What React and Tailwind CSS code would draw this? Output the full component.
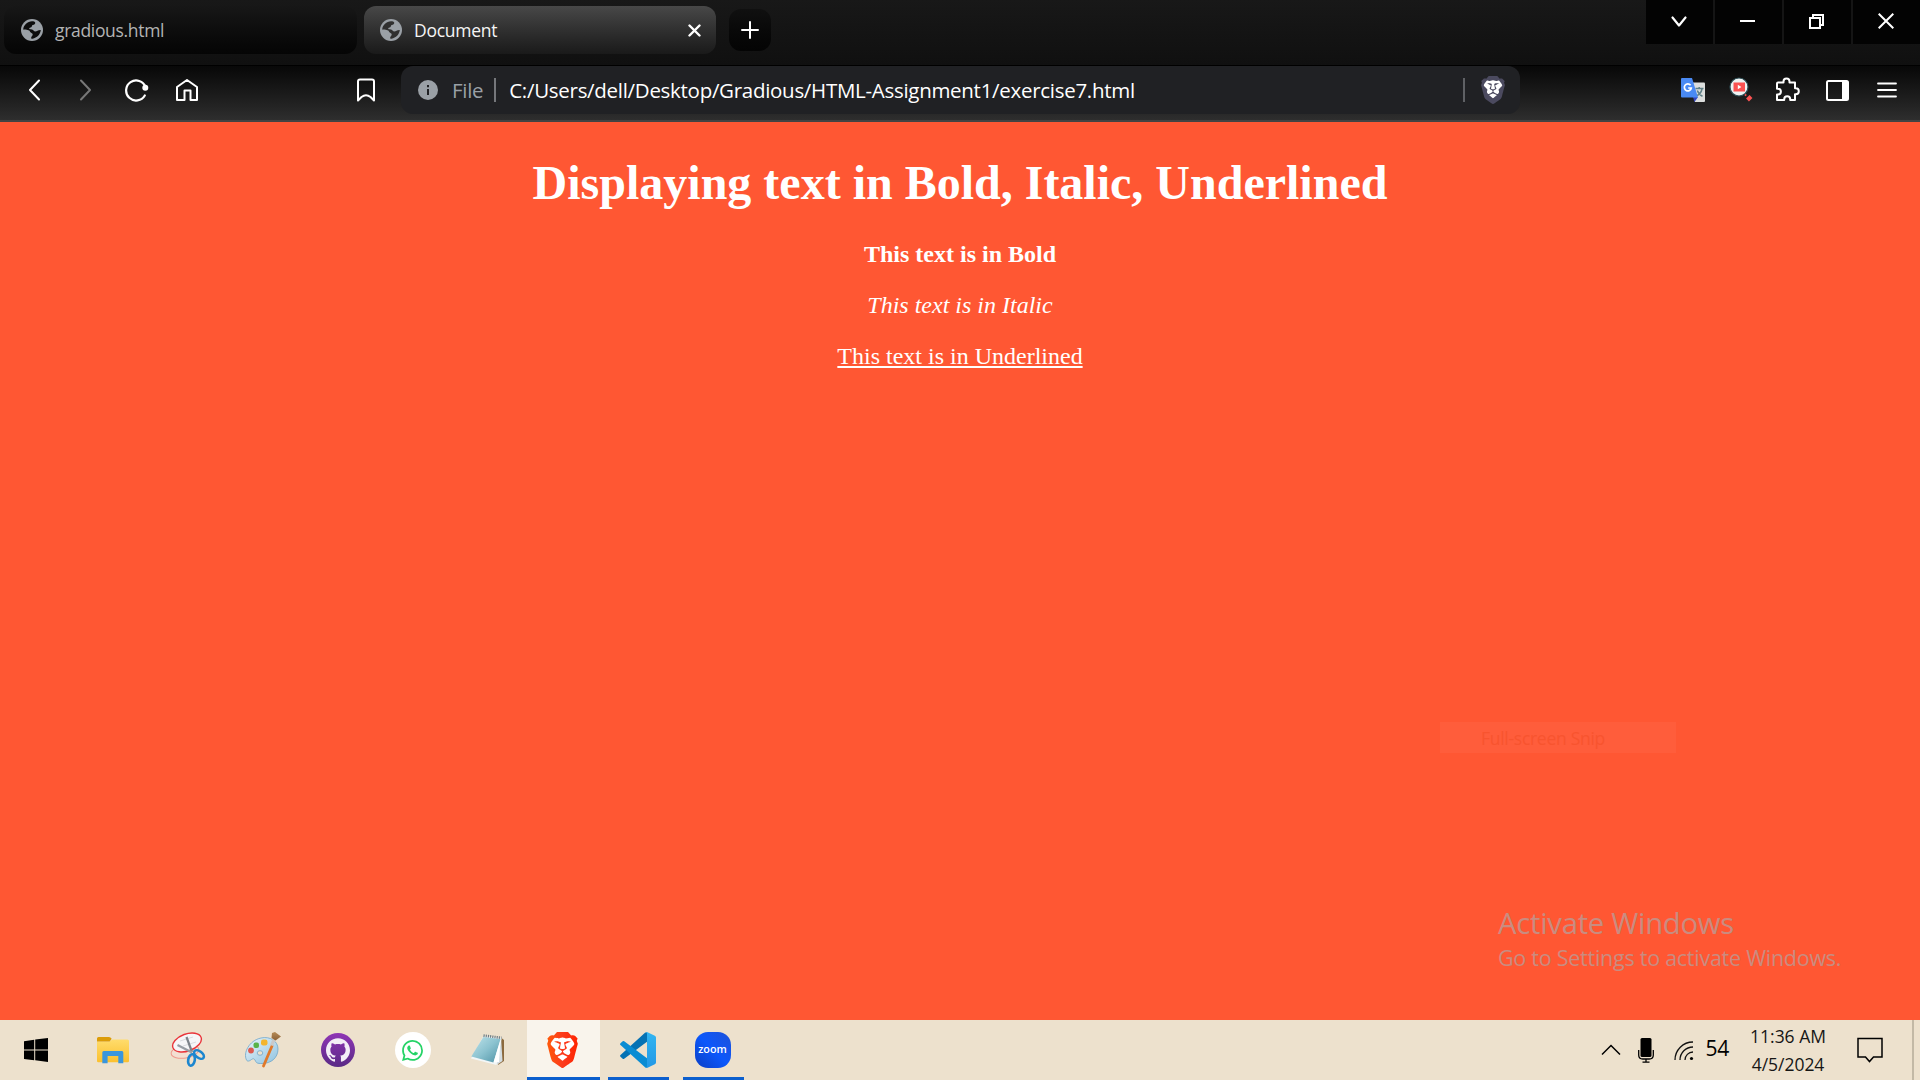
import React from "react";
import { SiBrave, SiGithub, SiWhatsapp } from "react-icons/si";

/* ---------- Browser chrome icons ---------- */

const Stroke = ({ w, h, vb, sw = 2, color = "#fff", className = "", children }) => (
  <svg width={w} height={h} viewBox={vb || `0 0 ${w} ${h}`} fill="none" stroke={color} strokeWidth={sw}
    strokeLinecap="round" strokeLinejoin="round" className={`shrink-0 ${className}`}>{children}</svg>
);

const Globe = ({ sea }) => (
  <svg width="22" height="22" viewBox="0 0 22 22" className="mx-0.5 shrink-0">
    <circle cx="11" cy="11" r="11" fill="#9aa0a6" />
    <path d="M2.200 10.500C2.600 6 6.500 2.500 11 2.300c1.500 0 3 .4 3.200 1.200.3 1.600-1 2.300-2.400 2.500-1 .2-.7 1.600-1.600 2.200-.8.600-2 .3-2 1.300 0 1 1.200.8 2.800.9 1.800.1 1.700 2.200 3.300 2.200 1.800 0 2.400-1.600 5.500-1.500-.4 4.400-3.800 8-8.300 8.600-1 .1-1.500-.2-1.300-1.200.2-1.300 1.400-1.600 1.500-3 0-1.700-2.500-1.400-2.900-3.200C8.400 10.700 5.500 11 2.200 10.500z" fill={sea} />
  </svg>
);

const BraveShield = () => (
  <svg width="24" height="28" viewBox="1.7 0 20.6 24" className="shrink-0">
    <path d="M4 3.500 12 2.600l8 .9 1 3.500-3 11-6 4.500L6 18 3 7z" fill="#fff" />
    <SiBrave x="0" y="0" size={24} color="#4b4a5f" />
  </svg>
);

const Translate = () => (
  <svg width="24" height="24" viewBox="0 0 24 24" className="shrink-0">
    <path d="M9 4.500h14a1 1 0 0 1 1 1V23a1 1 0 0 1-1 1H14z" fill="#dcdedd" />
    <path d="M12 19h5l-3.500 5z" fill="#3444c0" />
    <path d="M14.500 10.500h8M18.200 9V11M21 11c-.6 3-3 5.700-5.500 7M16.300 12.500c1 2.500 3 4.800 5.200 5.800" stroke="#5f7f86" strokeWidth="1.500" fill="none" />
    <path d="M1 0h10l6 19.500H1a1 1 0 0 1-1-1V1a1 1 0 0 1 1-1z" fill="#4a8af4" />
    <path d="M9.600 7.300A3.500 3.500 0 1 0 10.300 10H7.200" stroke="#fff" strokeWidth="1.700" fill="none" />
  </svg>
);

const VideoSearch = () => (
  <svg width="24" height="26" viewBox="0 0 24 26" className="shrink-0">
    <circle cx="10" cy="10" r="9" fill="#eef3f3" stroke="#2e5058" strokeWidth="1.200" />
    <rect x="4.500" y="5.500" width="11.500" height="9" fill="#fb5252" />
    <path d="M8.800 7.800v4.400l3.600-2.200z" fill="#fff" />
    <path d="M16 17.500l1.200 1.200" stroke="#fb5252" strokeWidth="1.800" />
    <path d="M18.500 23l3.500-3.500" stroke="#fb5252" strokeWidth="4" />
  </svg>
);

/* ---------- Taskbar icons ---------- */

const WindowsLogo = () => (
  <svg width="24" height="24" viewBox="0 0 24 24" fill="#000">
    <path d="M0 3.300 10.200 1.800V11.500H0zM11.200 1.600 24 0v11.500H11.200zM0 12.500h10.200v9.700L0 20.900zM11.200 12.500H24V24l-12.800-1.700z" />
  </svg>
);

const Folder = () => (
  <svg width="32" height="27" viewBox="0 0 32 27">
    <defs><linearGradient id="folder" x1="0" y1="0" x2="0" y2="1"><stop offset="0" stopColor="#ffdc6c" /><stop offset="1" stopColor="#fbc02e" /></linearGradient></defs>
    <path d="M0 4.500h12.500l3-2H30.500Q32 2.500 32 4v20q0 1.300-1.300 1.300H1.300Q0 25.300 0 24z" fill="url(#folder)" />
    <path d="M0 1.500Q0 0 1.500 0H12q1.500 0 2.700 1.800L12.700 4.500H0z" fill="#dc9c08" />
    <path d="M5.300 15.500q0-1.500 1.500-1.500H25q1.300 0 1.300 1.500V26.300h-5V19H10.600v7.300H5.300z" fill="#3a96dd" />
  </svg>
);

const SnipTool = () => (
  <svg width="36" height="36" viewBox="0 0 36 36" fill="none">
    <ellipse cx="15" cy="19.500" rx="14" ry="6.500" transform="rotate(-10 15 19.500)" fill="#f3dfd2" stroke="#ee9a8d" strokeWidth="1" />
    <ellipse cx="17" cy="10.500" rx="15" ry="8.500" transform="rotate(-20 17 10.500)" fill="#f6f6f8" stroke="#e9353b" strokeWidth="1.400" />
    <path d="M10 9l13-4M13 14l13-4" stroke="#d2d4d8" strokeWidth=".8" />
    <path d="M16.500 5 22 20" stroke="#7d838a" strokeWidth="2.200" />
    <path d="M7.500 13 22 20.500" stroke="#989da4" strokeWidth="2.200" />
    <ellipse cx="21.500" cy="28" rx="3.300" ry="5.800" transform="rotate(10 21.500 28)" stroke="#1c86cf" strokeWidth="2.600" />
    <ellipse cx="29" cy="22.500" rx="3.300" ry="5.600" transform="rotate(-52 29 22.500)" stroke="#1c86cf" strokeWidth="2.600" />
  </svg>
);

const Paint = () => (
  <svg width="38" height="36" viewBox="0 0 38 36">
    <defs>
      <linearGradient id="palette" x1="0" y1="0" x2="1" y2="1"><stop offset="0" stopColor="#eaf5fb" /><stop offset="1" stopColor="#8fc3e0" /></linearGradient>
      <linearGradient id="bristle" x1="0" y1="0" x2="0" y2="1"><stop offset="0" stopColor="#b78b55" /><stop offset="1" stopColor="#8a6138" /></linearGradient>
    </defs>
    <path d="M2.500 28C-1 21 5 8.500 17 6c9-2 17 3 17 11 0 9-7 14.500-16 14.500-5 0-5.500-.5-6.500-2.500-1.500-3-2.500-2.500-4-1.500-1.500 1.300-4 2.500-5 .5z" fill="url(#palette)" stroke="#6ea6c9" strokeWidth=".8" />
    <ellipse cx="16" cy="21" rx="2.800" ry="2.300" fill="#ede1cd" stroke="#6ea6c9" strokeWidth=".8" />
    <circle cx="7" cy="18.500" r="2.900" fill="#dd5a50" />
    <rect x="9.500" y="10.500" width="5.500" height="5.500" rx="2" fill="#58b348" />
    <rect x="17" y="7.500" width="6.500" height="6" rx="2.200" fill="#f3b52e" />
    <path d="M28 14 19.500 34" stroke="#e0792a" strokeWidth="2.800" strokeLinecap="round" />
    <path d="M27.500 13.500 30 7.500" stroke="#c9c9c9" strokeWidth="3.200" />
    <path d="M27.500 6 28 1l3-1 6 4.500-5.500 4z" fill="url(#bristle)" />
  </svg>
);

const GithubDesktop = () => (
  <div className="flex size-[34px] items-center justify-center rounded-full bg-linear-to-b from-[#8f35b5] to-[#5a2a86]">
    <SiGithub size={24} color="#f3eef7" />
  </div>
);

const Whatsapp = () => (
  <div className="flex size-9 items-center justify-center rounded-full bg-white">
    <SiWhatsapp size={21} color="#25d366" />
  </div>
);

const Notepad = () => (
  <svg width="34" height="32" viewBox="0 0 34 32">
    <defs><linearGradient id="pad" x1="0" y1="0" x2="1" y2="1"><stop offset="0" stopColor="#bfe3ea" /><stop offset=".5" stopColor="#8cc3d0" /><stop offset="1" stopColor="#4f93a6" /></linearGradient></defs>
    <path d="M30.500 4 33 6v21l-6 4z" fill="#8c6a3e" />
    <path d="M30 3.500 31.500 27 25.500 31z" fill="#d4dde2" />
    <path d="M12.500 2 30.500 4 25.500 31 0 24.500z" fill="#f2f6f7" />
    <path d="M12.300 3 29.500 5 22.500 28.500 .3 22.500z" fill="url(#pad)" />
    <path d="M22.500 28.500 29.500 6 28 28z" fill="#fff" />
    <path d="M12.500 1.600 30.500 3.800" stroke="#6d7d86" strokeWidth="2.600" strokeDasharray="1.200 1" />
  </svg>
);

const Brave = () => (
  <svg width="31" height="36" viewBox="1.700 0 20.600 24">
    <defs><linearGradient id="brave" x1="0" y1="0" x2="1" y2="0"><stop offset="0" stopColor="#ff5a0a" /><stop offset=".5" stopColor="#fb3a1c" /><stop offset="1" stopColor="#ff2400" /></linearGradient></defs>
    <path d="M5 3.500 12 2.600l7 .9 1 3.500-3 11-5 3.500L7 18 4 7z" fill="#fff" />
    <SiBrave x="0" y="0" size={24} fill="url(#brave)" />
  </svg>
);

const VSCode = () => (
  <svg width="36" height="36" viewBox="0 0 36 36">
    <defs><linearGradient id="vsc" x1="0" y1="0" x2="0" y2="1"><stop offset="0" stopColor="#32b5f1" /><stop offset="1" stopColor="#2298e6" /></linearGradient></defs>
    <path d="M27 9.800 4.200 26.800q-.8.600-1.500 0L.5 24.700q-.9-.9 0-1.700L25 .8q1-.8 2-.6z" fill="#0572b4" />
    <path d="M27 26.200 4.200 9.200q-.8-.6-1.500 0L.5 11.300q-.9.900 0 1.700L25 35.200q1 .8 2 .6z" fill="#0a8cd3" />
    <path d="M27 0 34.800 3.800Q36 4.400 36 5.600V30.400q0 1.200-1.200 1.800L27 36q-1.200.3-2-.6 1.900 1.200 2-1.200V1.800Q26.900-.6 25 .6q.8-.9 2-.6z" fill="url(#vsc)" />
  </svg>
);

const Zoom = () => (
  <div className="flex size-9 items-center justify-center rounded-[13px] bg-linear-to-tr from-[#0b3fc4] via-[#0b57fb] to-[#1c52d8]">
    <span className="-mt-0.5 font-['Open_Sans',sans-serif] text-[10.800px] leading-none font-semibold text-white">zoom</span>
  </div>
);

const pinned = [
  ["explorer", Folder], ["snip", SnipTool], ["paint", Paint], ["github", GithubDesktop],
  ["whatsapp", Whatsapp], ["notepad", Notepad],
];

const WindowButton = ({ children }) => (
  <div className="flex h-11 w-[67px] items-center justify-center bg-[#030303] pr-0.5">{children}</div>
);

function TabStrip() {
  return (
    <div className="flex h-[65px] items-start bg-linear-to-b from-[#181818] to-[#101010]">
      <div className="mt-1.5 ml-1 flex h-12 w-[353px] items-center rounded-xl bg-linear-to-b from-[#171717] to-[#050505] pl-[15px]">
        <Globe sea="#0d0d0d" />
        <span className="-mt-px ml-[10px] text-[17.500px] leading-6 tracking-[-0.320px] text-[#b4b4b4]">gradious.html</span>
      </div>
      <div className="mt-1.5 ml-[7px] flex h-12 w-[352px] items-center rounded-xl bg-linear-to-b from-[#484848] to-[#1a1a1a] pl-3.5">
        <Globe sea="#303030" />
        <span className="-mt-px ml-[10px] flex-1 text-[17.500px] leading-6 tracking-[-0.250px] text-[#f5f5f5]">Document</span>
        <Stroke w={13} h={13} sw={2.4} className="mr-[15px]"><path d="M1.500 1.500l10 10M11.500 1.500l-10 10" /></Stroke>
      </div>
      <div className="mt-[9px] ml-[13px] flex h-[42px] w-[42px] items-center justify-center rounded-xl bg-linear-to-b from-[#101010] to-[#040404]">
        <Stroke w={18} h={18} sw={2}><path d="M9 1v16M1 9h16" /></Stroke>
      </div>
      <div className="ml-auto flex gap-[2px] bg-[#151515]">
        <WindowButton><Stroke w={16} h={12} sw={2.2} className="-mt-px"><path d="M1.500 1.500 8 9.500l6.500-8" /></Stroke></WindowButton>
        <WindowButton><div className="-mt-0.5 h-0.5 w-[15px] bg-white" /></WindowButton>
        <WindowButton>
          <svg width="15" height="15" viewBox="0 0 15 15" fill="none" stroke="#fff" strokeWidth="2" className="-mt-px">
            <path d="M1 4h10v10H1zM4 4V1h10v10h-3" />
          </svg>
        </WindowButton>
        <WindowButton>
          <svg width="16" height="16" viewBox="0 0 16 16" stroke="#fff" strokeWidth="2" className="-mt-0.5"><path d="M.7.7l14.600 14.600M15.300.7.7 15.300" /></svg>
        </WindowButton>
      </div>
    </div>
  );
}

function Toolbar() {
  return (
    <div className="flex h-[57px] items-start border-t border-b-2 border-t-black border-b-[#434343] bg-linear-to-b from-[#080808] to-[#2e2e2e]">
      <div className="flex h-12 flex-1 items-center">
        <Stroke w={12} h={22} className="ml-[28px]"><path d="M11 1.500 2 11l9 9.500" /></Stroke>
        <Stroke w={12} h={22} color="#777" className="ml-10"><path d="M1 1.500 10 11 1 20.500" /></Stroke>
        <svg width="24" height="24" viewBox="0 0 24 24" fill="none" stroke="#fff" strokeWidth="2.200" strokeLinecap="round" className="-mt-px ml-[33px]">
          <path d="M20.500 9A10 10 0 1 0 19.800 17.500" /><circle cx="20.300" cy="9.800" r="3" fill="#fff" stroke="none" />
        </svg>
        <Stroke w={22} h={22} className="ml-[27px]"><path d="M1 8 11 1l10 7v13h-6.500v-9.500h-6V21H1z" /></Stroke>
        <Stroke w={18} h={24} className="mr-[26px] ml-auto"><path d="M3 1.500h12q2 0 2 2v19L13.500 19Q9 15.500 4.500 19L1 22.500v-19q0-2 2-2z" /></Stroke>
      </div>
      <div className="flex h-12 w-[1119px] items-center rounded-xl bg-[#202124]">
        <svg width="20" height="20" viewBox="0 0 20 20" className="ml-[17px]">
          <circle cx="10" cy="10" r="10" fill="#9aa0a6" /><path d="M9 9h2v6H9zM9 5h2v2.200H9z" fill="#202124" />
        </svg>
        <span className="ml-3.5 text-[20.500px] leading-7 tracking-[-0.300px] text-[#9aa0a6]">File</span>
        <div className="ml-[11px] h-6 w-0.5 bg-[#75777b]" />
        <span className="ml-[13px] text-[20.500px] leading-7 tracking-[-0.290px] text-white">C:/Users/dell/Desktop/Gradious/HTML-Assignment1/exercise7.html</span>
        <div className="ml-auto h-6 w-0.5 bg-[#5f6165]" />
        <div className="mr-[15px] ml-4"><BraveShield /></div>
      </div>
      <div className="flex h-12 w-[400px] items-center justify-end pr-[23px]">
        <Translate />
        <div className="ml-[24px]"><VideoSearch /></div>
        <Stroke w={25} h={25} className="-mt-px mr-px ml-[22px]">
          <path d="M3 5.500h5.500v-1a3 3 0 0 1 6 0v1H20v5.800h.8a3 3 0 0 1 0 6H20V23h-4.800v-.8a3 3 0 0 0-6 0v.8H2v-5.500h1a2.900 2.900 0 0 0 0-5.800H2V6.500q0-1 1-1z" />
        </Stroke>
        <svg width="23" height="21" viewBox="0 0 23 21" className="ml-[25px]">
          <rect x="1" y="1" width="21" height="19" rx="1.500" fill="none" stroke="#fff" strokeWidth="2" /><path d="M16 1h6v19h-6z" fill="#fff" />
        </svg>
        <Stroke w={20} h={16} className="ml-7" sw={1.8}><path d="M1 1.500h18M1 8h18M1 14.500h18" /></Stroke>
      </div>
    </div>
  );
}

function Page() {
  return (
    <main className="relative flex-1 bg-[#ff5733] pt-[33px] text-center font-['Liberation_Serif',serif] text-white">
      <h1 className="text-[48px] leading-[56px] font-bold">Displaying text in Bold, Italic, Underlined</h1>
      <div className="mt-[30px] flex flex-col gap-6 text-[24px] leading-[27px]">
        <p className="font-bold">This text is in Bold</p>
        <p className="italic">This text is in Italic</p>
        <p><u className="decoration-2 underline-offset-2">This text is in Underlined</u></p>
      </div>
      <div className="absolute top-[600px] left-[1440px] flex h-[31px] w-[236px] items-center bg-[#ff5d3b] pl-[41px] font-['Open_Sans',sans-serif]">
        <span className="text-[17.500px] leading-6 tracking-[-0.280px] text-[#f8542f]">Full-screen Snip</span>
      </div>
      <div className="absolute top-[782px] left-[1498px] text-left font-['Open_Sans',sans-serif] text-[#c98c80]">
        <p className="text-[29.300px] leading-[39px] tracking-[-0.280px]">Activate Windows</p>
        <p className="text-[21.500px] leading-[30px] tracking-[-0.260px]">Go to Settings to activate Windows.</p>
      </div>
    </main>
  );
}

function Taskbar() {
  return (
    <footer className="flex h-[60px] bg-[#ede1cd] text-black">
      <div className="flex w-[75px] items-center pl-6"><WindowsLogo /></div>
      {pinned.map(([name, Icon]) => (
        <div key={name} className="flex w-[75px] items-center justify-center">
          <Icon />
        </div>
      ))}
      <div className="ml-0.5 flex w-[73px] items-center justify-center border-b-3 border-[#0c5fce] bg-[#f9f4ec] pt-[3px] pr-0.5"><Brave /></div>
      <div className="ml-2 flex w-[61px] items-center justify-center border-b-3 border-[#0c5fce] pt-[3px] pr-0.5"><VSCode /></div>
      <div className="ml-3.5 flex w-[61px] items-center justify-center border-b-3 border-[#0c5fce] pt-[3px] pr-0.5"><Zoom /></div>
      <div className="ml-auto flex items-center">
        <svg width="20" height="12" viewBox="0 0 20 12" fill="none" stroke="#000" strokeWidth="1.500"><path d="M1 10.500 10 1.500l9 9" /></svg>
        <svg width="16" height="25" viewBox="0 0 16 25" fill="none" stroke="#000" strokeWidth="1.300" className="ml-[17px]">
          <rect x="2.500" y="0" width="11" height="19" rx="1.500" fill="#000" stroke="none" />
          <path d="M.7 12v5q0 4 4 4h6.600q4 0 4-4v-5M8 21v3M4.500 24.200h7" />
        </svg>
        <svg width="20" height="20" viewBox="0 0 20 20" fill="none" stroke="#111" strokeWidth="1.300" className="mt-0.5 ml-5">
          <path d="M1 19A18 18 0 0 1 19 1M6 19A13 13 0 0 1 19 6M11 19a8 8 0 0 1 8-8" />
          <circle cx="17.500" cy="17.500" r="1.600" fill="#000" stroke="none" />
        </svg>
        <span className="-mt-1 ml-3 text-[21px] leading-7 tracking-[-0.300px]">54</span>
        <div className="ml-5 flex w-[78px] flex-col items-center text-[17.500px] leading-7 tracking-[-0.020px] text-[#161616]">
          <span>11:36 AM</span><span>4/5/2024</span>
        </div>
        <svg width="26" height="26" viewBox="0 0 26 26" fill="none" stroke="#000" strokeWidth="1.500" className="ml-[30px]">
          <path d="M1 1.500h24v18.500H16.500L12.500 24.500 8.500 20H1z" />
        </svg>
        <div className="ml-[29px] h-[60px] w-2 border-l-2 border-[#c3b9a6]" />
      </div>
    </footer>
  );
}

export default function App() {
  return (
    <div className="flex h-[1080px] w-[1920px] flex-col overflow-hidden font-['Open_Sans',sans-serif]">
      <TabStrip />
      <Toolbar />
      <Page />
      <Taskbar />
    </div>
  );
}
